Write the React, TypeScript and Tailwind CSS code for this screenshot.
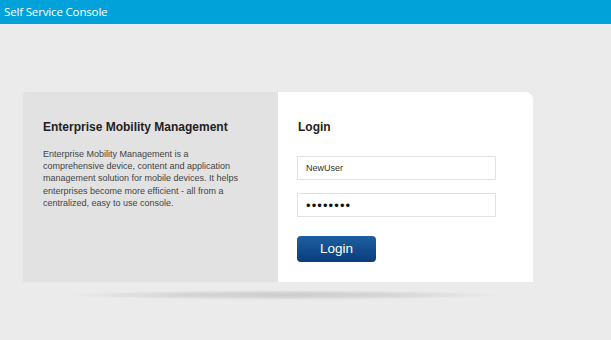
import React from 'react';

function InfoPanel() {
  return (
    <div className="w-[255px] bg-[#e2e2e2] rounded-tl-[4px] pl-[20px] pt-[27px]">
      <h2 className="text-[12px] leading-[16px] font-bold text-[#222]">Enterprise Mobility Management</h2>
      <p className="mt-[13px] w-[196px] text-[9px] leading-[12.2px] text-[#444]">
        Enterprise Mobility Management is a comprehensive device, content and application management solution for
        mobile devices. It helps enterprises become more efficient - all from a centralized, easy to use console.
      </p>
    </div>
  );
}

function LoginPanel() {
  return (
    <div className="w-[255px] bg-white rounded-tr-[8px] pl-[19px] pt-[27px]">
      <h2 className="pl-[1px] text-[12px] leading-[16px] font-bold text-[#222]">Login</h2>
      <div className="mt-[21px] flex flex-col gap-[13px]">
        <input
          className="w-[199px] h-[24px] border border-[#e2e2e2] bg-white px-[8px] text-[9px] text-[#333] outline-none"
          defaultValue="NewUser"
        />
        <input
          type="password"
          className="w-[199px] h-[24px] border border-[#e2e2e2] bg-white px-[8px] text-[13px] tracking-[1.1px] text-[#111] outline-none"
          defaultValue="password"
        />
      </div>
      <button className="mt-[19px] w-[79px] h-[26px] rounded-[4px] bg-gradient-to-b from-[#1d5fa1] to-[#0a3d7e] text-white text-[13.5px] leading-none">
        Login
      </button>
    </div>
  );
}

export default function App() {
  return (
    <div className="w-[611px] h-[340px] bg-[#ebebeb] font-['Liberation_Sans',Arial,sans-serif] overflow-hidden">
      <header className="h-[24px] bg-[#01a2da] flex items-center pl-[4px]">
        <span className="font-['Open_Sans',sans-serif] text-[11.6px] text-white tracking-[-0.2px]">Self Service Console</span>
      </header>
      <div className="ml-[23px] mt-[68px] flex h-[190px]">
        <InfoPanel />
        <LoginPanel />
      </div>
      <div className="ml-[65px] mt-[8px] w-[440px] h-[10px] bg-[radial-gradient(ellipse_at_center,#cbcbcb_0%,#d6d6d6_35%,rgba(235,235,235,0)_70%)]" />
    </div>
  );
}
